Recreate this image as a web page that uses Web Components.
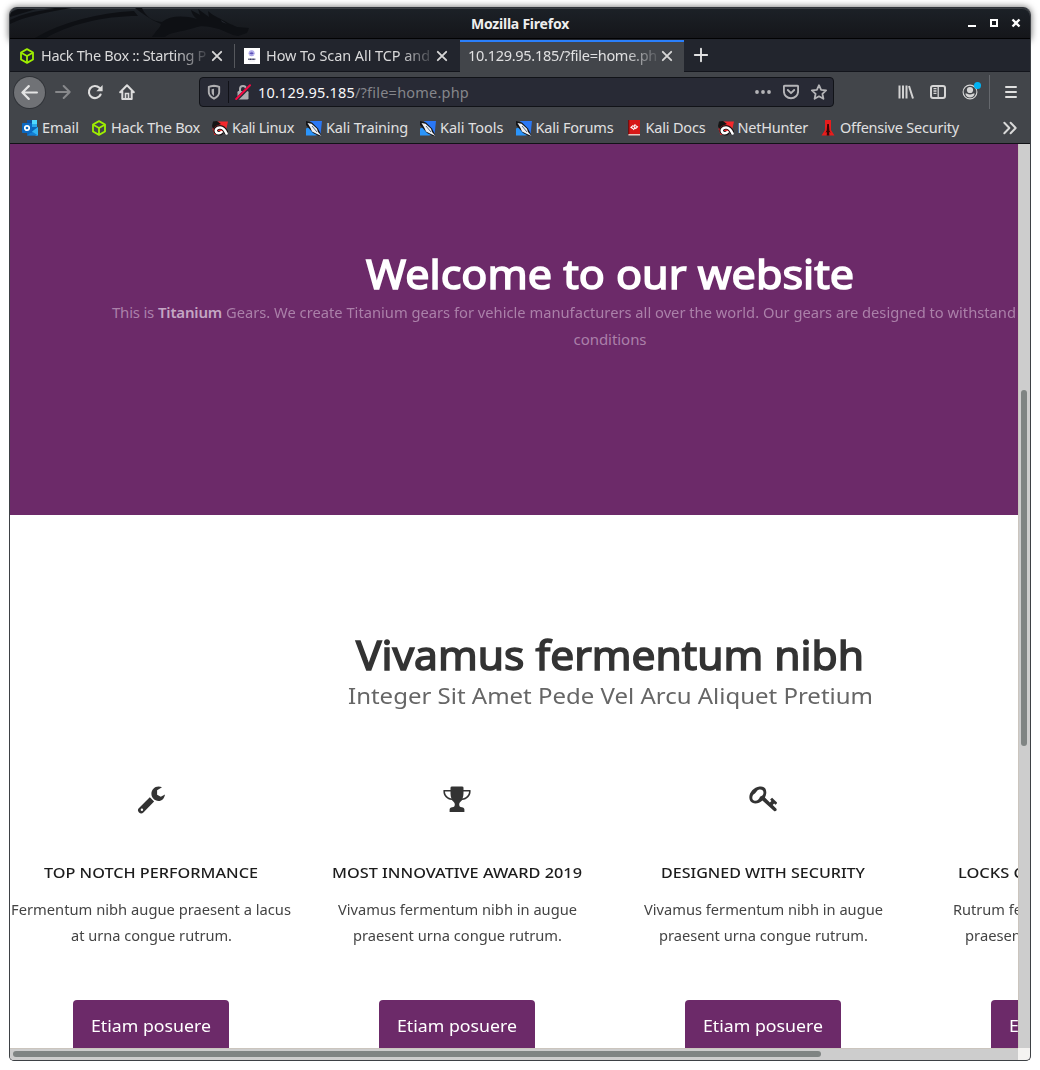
<!DOCTYPE html>
<html lang="en">
<head>
<meta charset="utf-8">
<title>Mozilla Firefox</title>
<style>
html,body{margin:0;background:#fff;font-family:"Noto Sans","Open Sans",sans-serif}
</style>
</head>
<body>
<browser-window></browser-window>
<script>
const def=(name,html,after)=>customElements.define(name,class extends HTMLElement{
  connectedCallback(){
    if(this.shadowRoot)return;
    this.attachShadow({mode:'open'}).innerHTML=typeof html==='function'?html(this):html;
    if(after)after(this);
  }
});

/* A single line fitted to the width given in "w": by letter-spacing, or by glyph width when "wide" is set. */
def('fit-text','<style>:host{display:inline-block;white-space:pre;text-align:left}span{display:inline-block;transform-origin:0 50%}</style><span><slot></slot></span>',el=>{
  const s=el.shadowRoot.querySelector('span'),w=+el.getAttribute('w'),n=[...el.textContent].length;
  el.style.width=w+'px';
  const natural=s.getBoundingClientRect().width;
  if(el.hasAttribute('wide'))s.style.transform=`scaleX(${w/natural})`;
  else s.style.letterSpacing=((w-natural)/n)+'px';
  s.style.marginRight='-20px';
});

const cube='<g fill="none" stroke="#9fef00" stroke-width="1.8" stroke-linejoin="round"><path d="M8 1.1 14 4.5v7L8 14.9 2 11.5v-7z"/><path d="M2.2 4.7 8 8l5.8-3.3M8 8v6.6"/></g>';
const linux='<path fill="#f3282c" d="M4.500 1.500H16l-1.800 8L12 10.500 7 15H2.500L.5 9l1-4z"/><path fill="#151515" d="M1 1.500 5 1l4 3-5 2-3 3-1-3z"/><path fill="none" stroke="#1a1213" stroke-width="4.600" d="M14.500 13.200c-1.500-3.500-3.500-6-6.500-6-3.500 0-5 2.600-3.800 4.700 1 1.700 4 2 5.300.2"/><path fill="none" stroke="#fff" stroke-width="2.500" stroke-linecap="round" d="M14.500 13.500c-1.500-3.500-3.500-6-6.500-6-3.500 0-5 2.500-3.800 4.500 1 1.700 4 1.700 5.300 0"/>';
const kali='<path fill="#2a78f6" d="M4 1h12l-1.500 13.500L9 9z"/><path fill="#2b95fb" d="M0 8.500 4 7l8 8-3 .5H0z"/><path fill="#131417" d="m0 1 6 1.500 6 6 3.500 7-2.500.5-6-3L0 5z"/><path fill="#eef0f3" d="m1.500 3 4 .8 5.500 5L12 12l3.500 4-4.500-2-5-2.500L4.500 8z"/><path stroke="#244064" stroke-width=".8" d="m6 6 5 6"/>';
const I={
 none:'',cube,linux,kali,
 hosting:'<path fill="#fff" d="M0 0h16v16H0z"/><circle cx="7.600" cy="5.300" r="3" fill="#a29be6"/><circle cx="7.600" cy="5.300" r="1.500" fill="#5b50b8"/><path stroke="#fff" stroke-width=".4" d="M4.500 4h6.500M4.500 6.700h6.500"/><path stroke="#34345c" stroke-width="1.400" stroke-dasharray="1.300 .3" d="M4.300 11.300h7"/><path stroke="#d9d9e6" stroke-width=".6" d="M5 13h6"/>',
 outlook:'<path fill="#28a8ea" d="M5 0h10v7H5z"/><path fill="#0f4f9e" d="M5 0h5v4H5zM5 4h5v4H5z"/><path fill="#50d9ff" d="M10 0h5v4h-5z"/><path fill="#0a65b8" d="M5 7h11v8.500H5z"/><path fill="#32b4f3" d="m16 7-8 6 7 3 1-1z"/><path fill="#147fd2" d="m5 15.500 5-4 6 4z"/><rect y="3" width="10" height="10" rx=".8" fill="#0b69c3"/><circle cx="5" cy="8" r="2.200" fill="none" stroke="#fff" stroke-width="1.700"/>',
 docs:'<path fill="#d61717" d="M2 0h12v14H2z"/><path fill="#741010" d="M2 0h1.300v15H2z"/><path fill="#e7c8c0" d="M2.400 14h11.600v1.500H2.400z"/><path fill="none" stroke="#fff" stroke-width="1.100" d="M7.200 5.300 5 7.300l2.200 1.400M9.300 5.500l2.200 1.400-2.200 2M9.300 4.200 7.800 6.400l1.200 1.200-1.700 2.200"/>',
 offsec:'<path fill="#e81c1c" d="M5 0h6v10l3.500 5.500h-13L5 10z"/><path fill="#370505" d="M7.200 4h1.700l.5 6.500 1.200 2.200-1.500-.8.3 3.500H6.700l.3-3.500-1.500.8 1.200-2.200z"/>',
 x:'<path fill="none" stroke="#d6d6d6" stroke-width="1.900" stroke-linecap="round" d="m3.800 3.800 8.400 8.400m0-8.400-8.400 8.400"/>',
 plus:'<path stroke="#e1e1e2" stroke-width="1.900" stroke-linecap="round" d="M8 1.800v12.400M1.800 8h12.400"/>',
 back:'<path fill="none" stroke="#e4e4e4" stroke-width="2" stroke-linecap="round" stroke-linejoin="round" d="M15 8H1.300M7.300 2 1.300 8l6 6"/>',
 fwd:'<path fill="none" stroke="#87888b" stroke-width="2" stroke-linecap="round" stroke-linejoin="round" d="M1 8h13.700M8.700 2l6 6-6 6"/>',
 reload:'<path fill="none" stroke="#dcdcdc" stroke-width="2.100" stroke-linecap="round" d="M13.600 10.500A6.100 6.100 0 1 1 12.400 3.800L14 5.500"/><path fill="#dcdcdc" d="M15.600 1v6.200H9.400z"/>',
 home:'<path fill="none" stroke="#dcdcdc" stroke-width="2" stroke-linecap="round" stroke-linejoin="round" d="m1.200 8.200 6.800-7 6.800 7M3.300 7.500V15h9.400V7.500"/><path fill="none" stroke="#dcdcdc" stroke-width="1.600" d="M6.500 14.500v-5h3v5"/>',
 shield:'<path fill="none" stroke="#aeaeb1" stroke-width="1.900" stroke-linejoin="round" d="M8 1.800c2 .2 3.900.5 5.200 1v5.500c0 3-3 5.300-5.200 6.400-2.200-1.100-5.200-3.400-5.200-6.400V2.800c1.300-.5 3.200-.8 5.200-1z"/><path fill="#aeaeb1" d="M8 4.700v7.300c-1.400-.9-2.400-2.200-2.400-4V5.200z"/>',
 lock:'<rect x="2.500" y="7" width="11" height="8.500" rx="1.300" fill="#aeaeb1"/><path fill="none" stroke="#aeaeb1" stroke-width="2" d="M5 7.500V5a3 3 0 0 1 6 0v2.500"/><path stroke="#292a35" stroke-width="3.400" d="M1.500 15.500 15 2"/><path stroke="#f50a43" stroke-width="2" stroke-linecap="round" d="M1.200 15 15 1.300"/>',
 dots:'<g fill="#b4b4b7"><circle cx="2" cy="8" r="1.900"/><circle cx="8" cy="8" r="1.900"/><circle cx="14" cy="8" r="1.900"/></g>',
 pocket:'<path fill="none" stroke="#b4b4b7" stroke-width="1.900" stroke-linejoin="round" d="M1.700 1.800h12.600q.8 0 .8.800v4.600a7.100 7.100 0 0 1-14.200 0V2.600q0-.8.800-.8z"/><path fill="none" stroke="#b4b4b7" stroke-width="1.900" stroke-linecap="round" stroke-linejoin="round" d="M4.800 6 8 9.200 11.200 6"/>',
 star:'<path fill="none" stroke="#b4b4b7" stroke-width="1.800" stroke-linejoin="round" d="m8 1.200 2.100 4.600 5 .6-3.700 3.400 1 5L8 12.300l-4.400 2.500 1-5L.9 6.400l5-.6z"/>',
 library:'<path fill="none" stroke="#d2d2d2" stroke-width="2" d="M1.500 1.500v13M5 1.500v13M8.500 1.500v13M11 2l4 12.500"/>',
 sidebar:'<rect x="1" y="2" width="14" height="12" rx="2" fill="none" stroke="#d6d6d6" stroke-width="2"/><path stroke="#d6d6d6" stroke-width="1.300" d="M8.200 2v12M3.500 4.700h3M3.500 7h3M3.500 9.300h3"/>',
 account:'<circle cx="8" cy="8" r="6.900" fill="none" stroke="#d6d6d6" stroke-width="1.100"/><circle cx="8" cy="6" r="3.100" fill="#d6d6d6"/><path fill="#d6d6d6" d="M3.300 9.500c.5 0 1.500-.1 1.900.2 1.600 1 4 1 5.600 0 .4-.3 1.400-.2 1.900-.2-.4 2.600-2.400 3.900-4.700 3.900S3.700 12.100 3.300 9.500z"/>',
 menu:'<path stroke="#e0e0e0" stroke-width="2" stroke-linecap="round" d="M3 3h10M3 8h10M3 13h10"/>',
 more:'<path fill="none" stroke="#d8d8d8" stroke-width="2" stroke-linecap="round" stroke-linejoin="round" d="M2.300 2.800 7.400 8l-5.100 5.200M8.600 2.800 13.700 8l-5.100 5.200"/>',
 min:'<path fill="#fff" d="M4 10h8v2H4z"/>',
 max:'<path fill="none" stroke="#fff" stroke-width="2" d="M5 5h6v6H5z"/>',
 close:'<path fill="none" stroke="#fff" stroke-width="2.300" d="m4.500 4.500 7 7m0-7-7 7"/>',
 wrench:'<path fill="#333" d="m13.900 12.200 3.200 3.200L6.400 26.400a3.100 3.100 0 0 1-4.400-4.400L12.800 11.300z"/><circle cx="4.900" cy="23.700" r="1.200" fill="#fff"/><path fill="#333" d="M21.500.6c-4 .1-7.100 3.200-7.100 7.200 0 3.900 3.200 7.100 7.100 7.100 3.500 0 6-2.700 6.500-6.500l-4.200 2.400-3.700-2.100V4.200L25 1.300C24 .8 22.800.6 21.500.6z"/>',
 trophy:'<path fill="#333" d="M7.500 1.800Q7.500.6 9 .6h10q1.500 0 1.500 1.200V4h7c.8 5.400-2.900 9.400-8.300 10-1.200 1.700-3 2.400-3 4.200 0 2.200.6 2.700 2.700 3 1.500.3 2.500 1.200 2.500 2.200V26H6.600v-2.600c0-1 1-1.900 2.500-2.200 2.100-.3 2.700-.8 2.700-3 0-1.800-1.800-2.500-3-4.200C3.400 13.400-.3 9.400.5 4h7z"/><path fill="#fff" d="M2 5.500h5.500c0 2.700.1 5.200 1 7C4.400 11.400 2 8.900 2 5.500zM26 5.500h-5.500c0 2.700-.1 5.200-1 7 4.100-1.100 6.500-3.600 6.500-7z"/>',
 key:'<path fill="#333" fill-rule="evenodd" d="M10.600.6c4.500-.7 7.300 2.400 6.600 6.900-.1 1.300-.6 2.600-1.300 4l5 4.900 1.500-1.400-1.300-1.500 2-1.700 5.300 5-1.900 2-1.400-1.400-1.400 1.500 3.500 3.500c1.500 1.600-.8 4-2.400 2.300L13.400 14.500C9.600 18.200 3.500 18.300 1.300 15-1.900 9.500 3.200 1.500 10.600.6zM10.200 3.600C7.500 4.500 7.400 6.600 5.900 7.600 2.800 9.200 2.600 12.900 4.500 14.200c3 1.600 5.700-.7 6.500-3.500 2.800-.7 4-2.800 3.300-5.200-.4-1.400-2-2.500-4.100-1.900z"/>'
};
def('ui-icon',el=>{const s=+(el.getAttribute('size')||16),v=+(el.getAttribute('box')||16);
 return `<style>:host{display:block;flex:none;width:${s}px;height:${s}px}svg{display:block}</style><svg width="${s}" height="${s}" viewBox="0 0 ${v} ${v}">${I[el.getAttribute('name')]}</svg>`});

def('title-bar',`<style>
:host{display:grid;grid-template-columns:1fr auto 1fr;align-items:center;height:30px;border-bottom:1px solid #020203;background:linear-gradient(#1c2127,#15161a);box-shadow:inset 0 1px #3a3e43;border-radius:8px 8px 0 0;overflow:hidden;color:#eee}
.art{height:30px}.art svg{display:block}
.t{font-weight:700;font-size:14px;line-height:28px;padding-top:2px}
.c{display:flex;justify-content:flex-end;gap:6px;padding-right:6px}
</style><div class="art"><svg width="245" height="30" viewBox="0 0 245 30"><g fill="#0e1014"><path d="M0 12C12 6 24 3 45 1L34 0H62C36 4 14 9 0 16zM25 30C52 14 88 5 124 3l4 5C92 8 58 17 36 30zM0 9 26 1H8L0 5z"/><path d="M125 0h7c4 9 10 13 20 14 8-6 20-7 35-3-3-2-5-5-6-9l9 5-2-6 11 8-1-6c5 5 14 8 20 12l9 4 12 1-2 5-9 3-5-1-14-6c-11-3-18-4-25-1-13 4-24 4-29 9h-13c4-6 8-9 9-13-10-4-18-10-26-16z"/></g><path fill="#252830" d="m211 12 6 4-5-2z"/></svg></div><fit-text class="t" w="98">Mozilla Firefox</fit-text><div class="c"><ui-icon name="min"></ui-icon><ui-icon name="max"></ui-icon><ui-icon name="close"></ui-icon></div>`);

def('browser-tab',`<style>
:host{display:flex;align-items:center;width:225px;height:32px;box-sizing:border-box;padding:0 10px 0 9px;font-size:14.500px;color:#d9d9da;line-height:30px}
:host([sep])::before{content:"";width:1px;height:24px;background:#56585d;margin-left:-10px;margin-right:9px}
:host([active]){background:#42454a;box-shadow:inset 0 2px #2a7ffb;width:224px;height:33px;padding:0 9px 1px 8px;color:#e0e0e1}
.i{margin-right:6px}
.t{flex:1;height:32px;overflow:hidden;-webkit-mask:linear-gradient(90deg,#000 calc(100% - 34px),rgba(0,0,0,.08));mask:linear-gradient(90deg,#000 calc(100% - 34px),rgba(0,0,0,.08))}
</style><ui-icon class="i" name="none"></ui-icon><div class="t"><slot></slot></div><ui-icon name="x"></ui-icon>`,el=>{
 const i=el.shadowRoot.querySelector('.i'),n=el.getAttribute('icon');
 if(n){const c=document.createElement('ui-icon');c.className='i';c.setAttribute('name',n);i.replaceWith(c)}else i.remove();
});

def('tab-strip',`<style>:host{display:flex;height:33px;background:#22252d;border-bottom:1px solid #13151c;padding-top:1px;box-sizing:border-box}
browser-tab{flex:none}.p{padding:7px 9px}</style>
<browser-tab icon="cube"><fit-text w="165">Hack The Box :: Starting P</fit-text></browser-tab><browser-tab sep icon="hosting"><fit-text w="164">How To Scan All TCP and</fit-text></browser-tab><browser-tab active><fit-text w="189">10.129.95.185/?file=home.ph</fit-text></browser-tab><ui-icon class="p" name="plus"></ui-icon>`);

def('nav-bar',`<style>
:host{display:flex;align-items:center;height:40px;color:#e2e2e3}
.b{display:grid;place-items:center;width:31px;height:31px;border-radius:50%;background:#707276;box-shadow:0 0 0 1px #303338;margin-left:4px;margin-right:1px}
.g{display:flex;gap:16px;margin-left:9px}
.u{display:flex;align-items:center;box-sizing:border-box;width:635px;height:30px;margin-left:64px;background:#282a35;border:1px solid #111318;border-radius:4px;font-size:14.500px;color:#85868b}
.u>.s{margin-left:6px}.v{width:1px;height:22px;background:#101117;margin:0 6px 0 6px}
.url{margin-left:7px;display:flex;line-height:28px}.url b{font-weight:400;color:#f8f8f9}
.r{margin-left:auto;display:flex;gap:12px;margin-right:6px}
.q{display:flex;align-items:center;gap:16px;margin-left:64px}
.a{position:relative}.a::after{content:"";position:absolute;right:-3px;top:-2px;width:7px;height:7px;border-radius:50%;background:#00b3f4}
.l{width:1px;height:34px;background:#65686d;margin-left:11px;margin-right:13px}
</style><div class="b"><ui-icon name="back" size="17"></ui-icon></div><div class="g"><ui-icon name="fwd"></ui-icon><ui-icon name="reload"></ui-icon><ui-icon name="home"></ui-icon></div>
<div class="u"><ui-icon class="s" name="shield"></ui-icon><span class="v"></span><ui-icon name="lock"></ui-icon><span class="url"><b><fit-text w="97">10.129.95.185</fit-text></b><fit-text w="114">/?file=home.php</fit-text></span><span class="r"><ui-icon name="dots"></ui-icon><ui-icon name="pocket"></ui-icon><ui-icon name="star"></ui-icon></span></div>
<div class="q"><ui-icon name="library"></ui-icon><ui-icon name="sidebar"></ui-icon><ui-icon class="a" name="account"></ui-icon></div><span class="l"></span><ui-icon name="menu"></ui-icon>`);

def('book-mark',el=>`<style>:host{display:flex;align-items:center;gap:4px}</style><ui-icon name="${el.getAttribute('icon')}"></ui-icon><fit-text w="${el.getAttribute('w')}">${el.textContent}</fit-text>`);
def('bookmark-bar',`<style>:host{display:flex;align-items:center;gap:12px;height:31px;padding:0 12px;font-size:14.500px;line-height:31px;color:#e0e0e1;border-bottom:1px solid #111216}.m{margin-left:auto}</style>
<book-mark icon="outlook" w="37">Email</book-mark><book-mark icon="cube" w="89">Hack The Box</book-mark><book-mark icon="linux" w="62">Kali Linux</book-mark><book-mark icon="kali" w="82">Kali Training</book-mark><book-mark icon="kali" w="63.500">Kali Tools</book-mark><book-mark icon="kali" w="78">Kali Forums</book-mark><book-mark icon="docs" w="60">Kali Docs</book-mark><book-mark icon="linux" w="70.500">NetHunter</book-mark><book-mark icon="offsec" w="119">Offensive Security</book-mark><ui-icon class="m" name="more"></ui-icon>`);

def('hero-banner',`<style>
:host{display:block;width:1200px;height:371px;box-sizing:border-box;padding-top:106px;background:#6c2a69;text-align:center;color:#ab80a9}
h1{margin:0;font-weight:400;font-size:40px;line-height:48px;color:#fff;-webkit-text-stroke:1.5px #fff;stroke-linejoin:round}
p{margin:1px 0 0;font-size:15px;line-height:27px}
.l{display:flex;gap:4px;padding-left:102px}b{color:#c4a6c3;font-weight:600}
</style><h1><fit-text wide w="488">Welcome to our website</fit-text></h1><p><span class="l"><fit-text w="42">This is</fit-text><b><fit-text w="64">Titanium</fit-text></b><fit-text wide w="790">Gears. We create Titanium gears for vehicle manufacturers all over the world. Our gears are designed to withstand</fit-text></span><fit-text w="73">conditions</fit-text></p>`);

def('feature-card',el=>{const f=n=>{const[t,w]=el.getAttribute(n).split('|');return`<fit-text wide w="${w}">${t}</fit-text>`};
return `<style>
:host{display:flex;flex-direction:column;align-items:center;width:282px;color:#444;font-size:15px;line-height:26px}
:host([clipped]) .row{align-self:flex-start;padding-left:var(--i)}
h2{margin:0;font-size:15px;line-height:26px;font-weight:500;color:#1c1c1c;margin-top:45px}
ui-icon{height:28px}.p{margin-top:11px}
.btn{margin-top:52px;width:156px;height:56px;border-radius:4px;background:#6c2a69;color:#fff;font-size:17px;line-height:52px;text-align:center}
</style><ui-icon name="${el.getAttribute('icon')}" size="28" box="28"></ui-icon><h2 class="row" style="--i:30px">${f('heading')}</h2><div class="row p" style="--i:25px">${f('one')}</div><div class="row" style="--i:37px">${f('two')}</div><div class="btn"><fit-text wide w="120">Etiam posuere</fit-text></div>`});

def('feature-section',`<style>
:host{display:block;width:1200px;padding-top:116px;text-align:center;background:#fff}
h1{margin:0;font-weight:400;font-size:40px;line-height:48px;color:#333;-webkit-text-stroke:1.5px #333;stroke-linejoin:round}
h3{margin:0;font-weight:400;font-size:22.500px;line-height:34px;color:#666}
.f{display:flex;gap:24px;margin-top:73px}
</style><h1><fit-text wide w="508">Vivamus fermentum nibh</fit-text></h1><h3><fit-text wide w="525">Integer Sit Amet Pede Vel Arcu Aliquet Pretium</fit-text></h3><div class="f">
<feature-card icon="wrench" heading="TOP NOTCH PERFORMANCE|214" one="Fermentum nibh augue praesent a lacus|280" two="at urna congue rutrum.|161"></feature-card>
<feature-card icon="trophy" heading="MOST INNOVATIVE AWARD 2019|250" one="Vivamus fermentum nibh in augue|239" two="praesent urna congue rutrum.|209"></feature-card>
<feature-card icon="key" heading="DESIGNED WITH SECURITY|204" one="Vivamus fermentum nibh in augue|239" two="praesent urna congue rutrum.|209"></feature-card>
<feature-card clipped icon="none" heading="LOCKS C|66" one="Rutrum fe|69" two="praesen|56"></feature-card></div>`);

def('page-view',`<style>
:host{display:grid;grid-template:904px 12px / 1008px 12px;background:#f4f3f1}
.v{overflow:hidden;background:#fff}
.y,.x{background:#cdcdcd;box-sizing:border-box}
.y{border-left:1px solid #cbc5be;padding:246px 0 0 2px}.x{border-top:1px solid #cbc5be;padding:2px 0 0 3px}
.y::before{content:"";display:block;width:6px;height:356px;border-radius:3px;background:#7f8483}
.x::before{content:"";display:block;width:808px;height:6px;border-radius:3px;background:#7f8483}
</style><div class="v"><hero-banner></hero-banner><feature-section></feature-section></div><div class="y"></div><div class="x"></div><div></div>`);

def('browser-window',`<style>
:host{display:block;width:1022px;margin:0 0 0 9px;padding-top:7px;position:relative}
:host::before{content:"";position:absolute;left:0;top:7px;width:1022px;height:36px;border-radius:8px;box-shadow:0 0 7px rgba(0,0,0,.6)}
.w{position:relative;box-sizing:border-box;width:1022px;height:1054px;border:1px solid #3e4145;border-top-color:#30343a;border-radius:8px 8px 5px 5px;overflow:hidden;background:#42454a}
</style><div class="w"><title-bar></title-bar><tab-strip></tab-strip><nav-bar></nav-bar><bookmark-bar></bookmark-bar><page-view></page-view></div>`);
</script>
</body>
</html>
